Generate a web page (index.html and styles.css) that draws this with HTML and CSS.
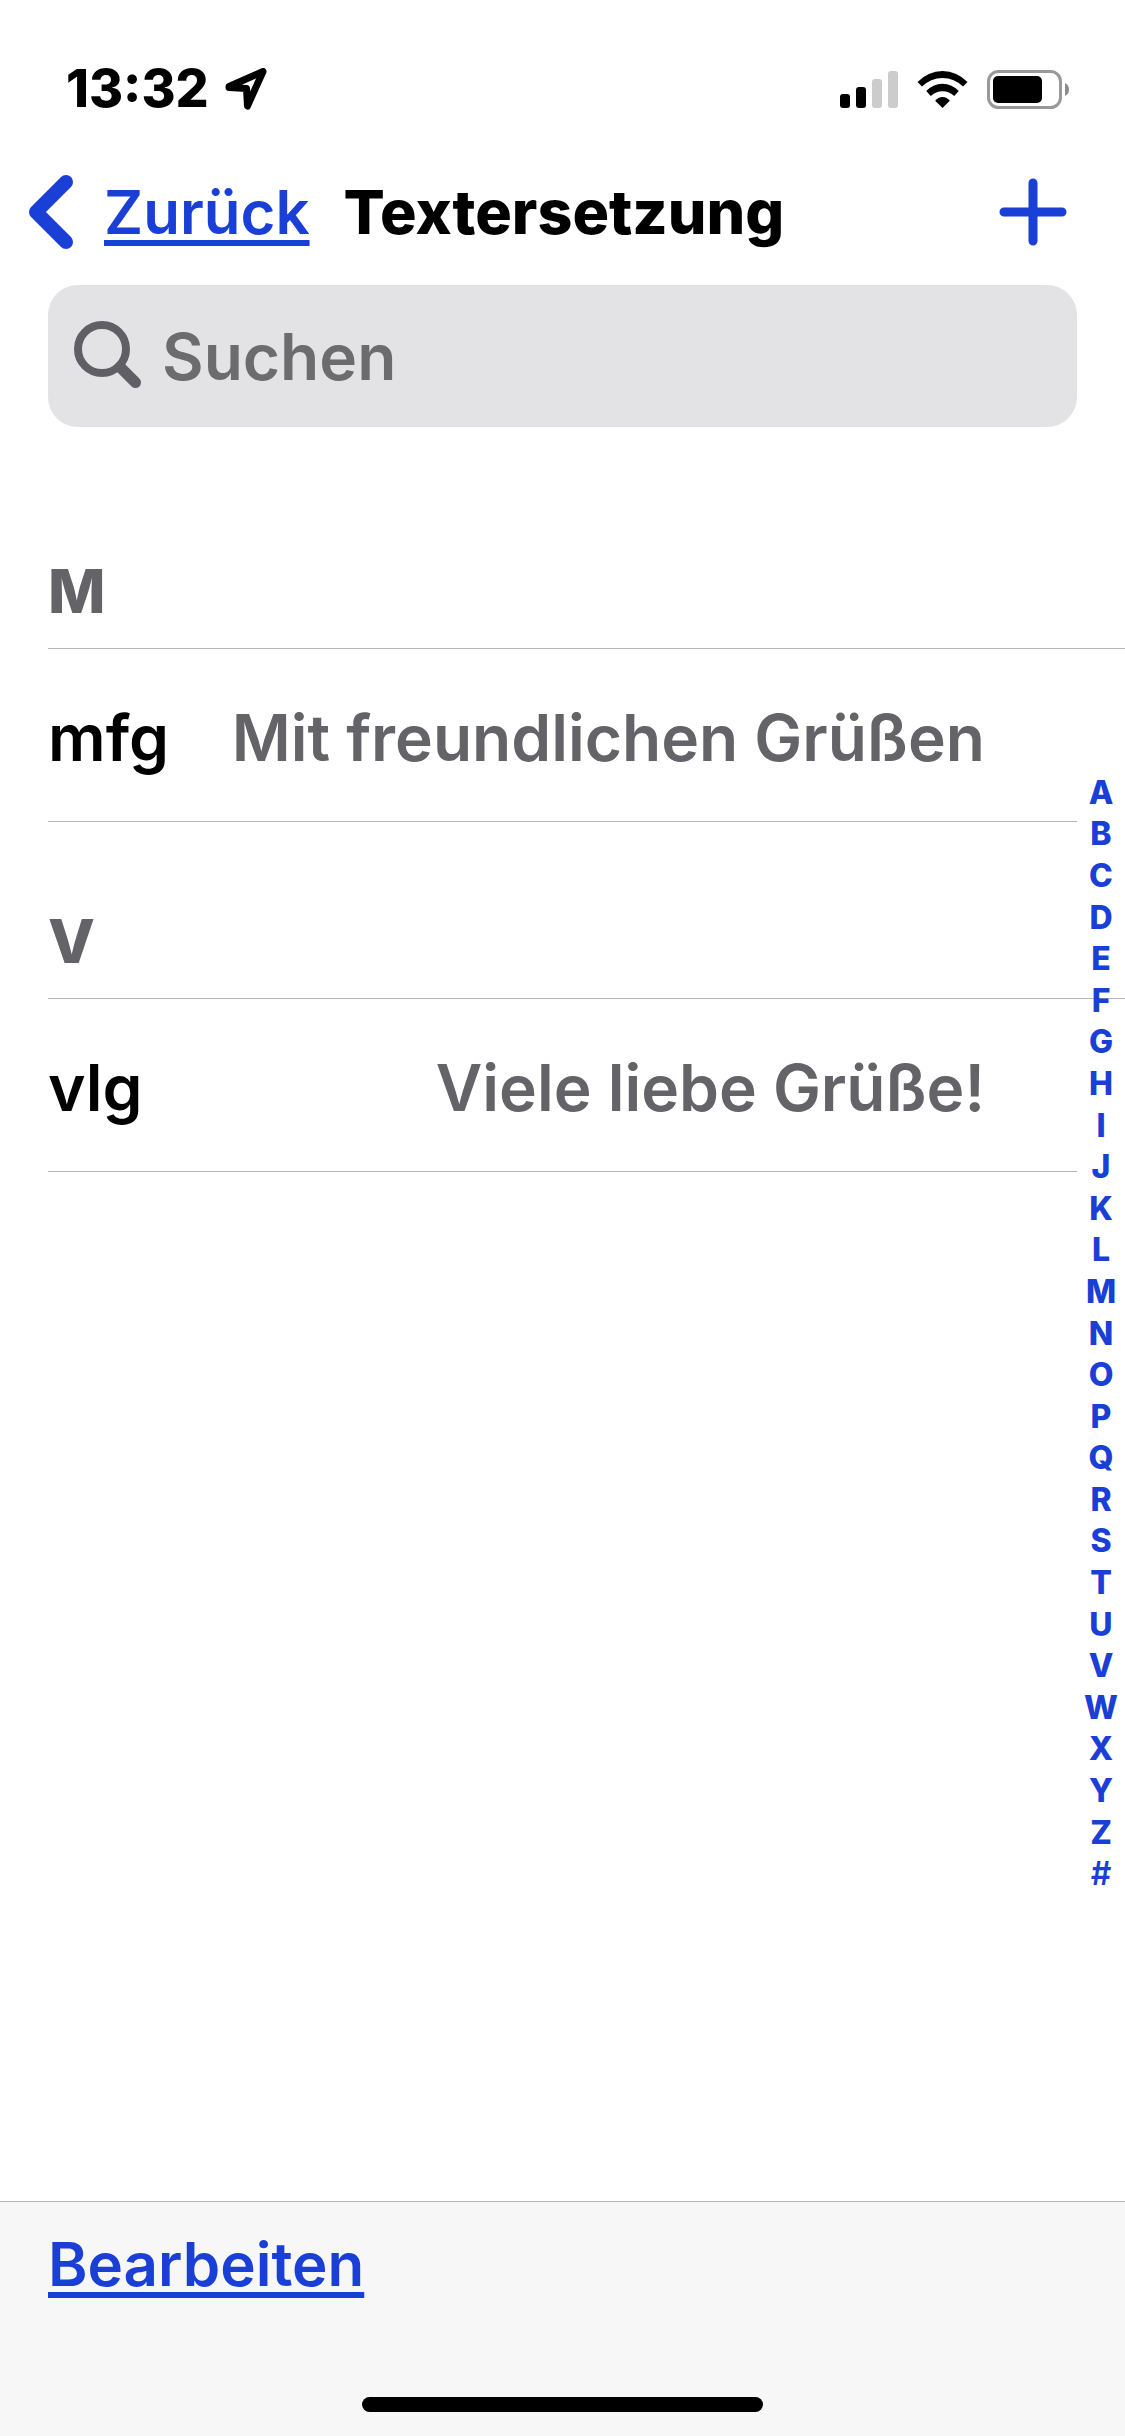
FILE: index.html
```html
<!DOCTYPE html>
<html lang="de">
<head>
<meta charset="utf-8">
<meta name="viewport" content="width=device-width, initial-scale=1">
<title>Textersetzung</title>
<link rel="stylesheet" href="styles.css">
</head>
<body>
<div class="statusbar">
  <div class="clock">
    <time>13:32</time>
    <svg class="location" width="42" height="42" viewBox="0 0 42 42" aria-hidden="true"><path d="M4 18.500 38 3.500 22.500 38 21.500 20.500 4 19.500Z"/></svg>
  </div>
  <div class="indicators">
    <svg width="58" height="37" viewBox="0 0 58 37" aria-hidden="true">
      <rect x="0" y="23" width="10" height="14" rx="3"/>
      <rect x="16" y="16" width="10" height="21" rx="3"/>
      <g fill="#cccccc"><rect x="32" y="8" width="10" height="29" rx="3"/><rect x="48" y="0" width="10" height="37" rx="3"/></g>
    </svg>
    <svg width="51" height="37" viewBox="0 0 50 37" aria-hidden="true">
      <path d="M0 11A34 34 0 0 1 50 11L45.5 15.5A29 29 0 0 0 4.5 15.5Z"/>
      <path d="M8.7 20A22 22 0 0 1 41.3 20L36.7 25A17 17 0 0 0 13.3 25Z"/>
      <path d="M17.7 29.7A9 9 0 0 1 32.3 29.7L25 37Z"/>
    </svg>
    <svg width="82" height="39" viewBox="0 0 82 39" aria-hidden="true">
      <rect x="1.5" y="1.5" width="72" height="36" rx="10" fill="none" stroke="#999999" stroke-width="3"/>
      <rect x="6" y="6" width="49" height="27" rx="5"/>
      <path d="M78 13Q82 15 82 19.500T78 26Z" fill="#8c8c8c"/>
    </svg>
  </div>
</div>

<header class="navbar">
  <a class="back" href="#">
    <svg width="44" height="74" viewBox="0 0 44 74" aria-hidden="true"><path d="M37 7 7 37 37 67"/></svg>
    <span class="link-text">Zurück</span>
  </a>
  <h1>Textersetzung</h1>
  <button class="add" type="button" aria-label="Hinzufügen">
    <svg width="68" height="68" viewBox="0 0 68 68" aria-hidden="true"><path d="M34 5V63M5 34H63"/></svg>
  </button>
</header>

<label class="search">
  <svg width="68" height="70" viewBox="0 0 68 70" aria-hidden="true">
    <circle cx="28" cy="28" r="24" stroke-width="8"/>
    <path d="M46 46 61.500 61.500" stroke-width="11"/>
  </svg>
  <input type="search" placeholder="Suchen" aria-label="Suchen">
</label>

<main class="content">
  <section class="group">
    <h2>M</h2>
    <ul><li><span class="short">mfg</span><span class="phrase">Mit freundlichen Grüßen</span></li></ul>
  </section>
  <section class="group">
    <h2>V</h2>
    <ul><li><span class="short">vlg</span><span class="phrase">Viele liebe Grüße!</span></li></ul>
  </section>
  <nav class="index" aria-label="Index">
    <a href="#">A</a><a href="#">B</a><a href="#">C</a><a href="#">D</a><a href="#">E</a><a href="#">F</a><a href="#">G</a><a href="#">H</a><a href="#">I</a><a href="#">J</a><a href="#">K</a><a href="#">L</a><a href="#">M</a><a href="#">N</a><a href="#">O</a><a href="#">P</a><a href="#">Q</a><a href="#">R</a><a href="#">S</a><a href="#">T</a><a href="#">U</a><a href="#">V</a><a href="#">W</a><a href="#">X</a><a href="#">Y</a><a href="#">Z</a><a class="other" href="#">#</a>
  </nav>
</main>

<footer class="toolbar">
  <button class="edit link-text" type="button">Bearbeiten</button>
  <div class="home-indicator"></div>
</footer>
</body>
</html>
```
FILE: styles.css
```css
:root {
  --blue: #193fd6;
  --gray: #636368;
  --line: #b6b6b8;
}

* {
  box-sizing: border-box;
}

body {
  display: flex;
  flex-direction: column;
  min-height: 100vh;
  margin: 0;
  background: #ffffff;
  color: #000000;
  font-family: Inter, "Liberation Sans", sans-serif;
}

svg {
  display: block;
  flex: none;
}

.statusbar {
  display: flex;
  align-items: center;
  justify-content: space-between;
  height: 108px;
  margin-top: 35px;
  margin-bottom: 1px;
  padding: 0 56px 0 66px;
}

.clock {
  display: flex;
  align-items: center;
  gap: 16px;
  font-size: 52px;
  font-weight: 800;
  line-height: 60px;
}

.location {
  fill: none;
  stroke: #000000;
  stroke-width: 7;
  stroke-linejoin: round;
}

.indicators {
  display: flex;
  align-items: center;
  gap: 19px;
}

.navbar {
  display: flex;
  align-items: center;
  height: 136px;
  padding: 0 58px 0 29px;
}

.back {
  display: flex;
  align-items: center;
  gap: 31px;
  color: var(--blue);
  text-decoration: none;
}

.back path,
.add path {
  fill: none;
  stroke: var(--blue);
  stroke-width: 14;
  stroke-linecap: round;
  stroke-linejoin: round;
}

.link-text {
  color: var(--blue);
  font-size: 60px;
  font-weight: 600;
  line-height: 74px;
  text-decoration: underline;
  text-decoration-thickness: 6px;
  text-underline-offset: 6px;
  text-decoration-skip-ink: none;
}

h1 {
  margin: 0 0 0 34px;
  font-size: 61px;
  font-weight: 800;
  line-height: 74px;
}

button {
  padding: 0;
  border: 0;
  background: none;
  font-family: inherit;
}

.add {
  margin-left: auto;
}

.add path {
  stroke-width: 9;
}

.search {
  display: flex;
  align-items: center;
  gap: 20px;
  height: 142px;
  margin: 5px 48px 0;
  padding: 0 26px;
  border-radius: 30px;
  background: #e3e3e5;
}

.search svg {
  fill: none;
  stroke: #5f5f65;
  stroke-linecap: round;
}

.search input {
  flex: 1;
  min-width: 0;
  padding: 2px 0 0;
  border: 0;
  outline: 0;
  background: none;
  font-family: inherit;
  font-size: 64px;
  font-weight: 600;
  line-height: 82px;
}

.search input::placeholder {
  color: #6c6c6e;
  opacity: 1;
}

.content {
  position: relative;
  flex: 1;
  padding-top: 44px;
  padding-left: 48px;
}

h2 {
  display: flex;
  align-items: flex-end;
  height: 178px;
  margin: 0;
  padding-bottom: 20px;
  border-bottom: 1px solid var(--line);
  color: var(--gray);
  font-size: 61px;
  font-weight: 800;
  line-height: 74px;
}

.group + .group h2 {
  height: 177px;
}

ul {
  margin: 0 48px 0 0;
  padding: 0;
  list-style: none;
}

li {
  display: flex;
  align-items: center;
  justify-content: space-between;
  height: 173px;
  padding-right: 92px;
  padding-top: 6px;
  border-bottom: 1px solid var(--line);
  font-size: 64px;
  font-weight: 600;
  line-height: 82px;
}

.phrase {
  color: var(--gray);
}

.index {
  position: absolute;
  top: 345px;
  right: 0;
  display: flex;
  flex-direction: column;
  width: 48px;
  height: 1123px;
}

.index a {
  display: flex;
  flex: 1;
  align-items: center;
  justify-content: center;
  color: var(--blue);
  font-size: 32px;
  font-weight: 800;
  line-height: 40px;
  text-decoration: none;
}

.index .other {
  font-weight: 600;
}

.toolbar {
  display: flex;
  flex-direction: column;
  align-items: flex-start;
  justify-content: space-between;
  height: 235px;
  padding: 25px 48px 24px;
  border-top: 1px solid var(--line);
  background: #f7f7f7;
}

.home-indicator {
  align-self: center;
  width: 39%;
  height: 15px;
  border-radius: 8px;
  background: #000000;
}
```
